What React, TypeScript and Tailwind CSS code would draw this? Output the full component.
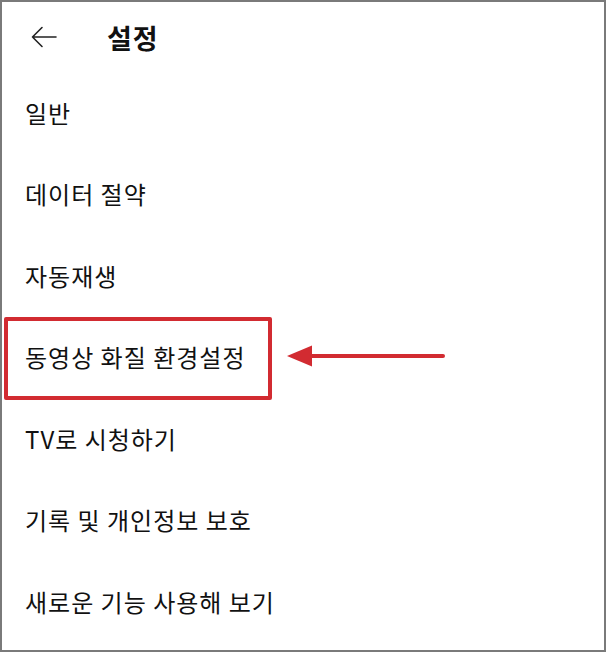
const items = [
  "일반",
  "데이터 절약",
  "자동재생",
  "동영상 화질 환경설정",
  "TV로 시청하기",
  "기록 및 개인정보 보호",
  "새로운 기능 사용해 보기",
];

export default function App() {
  return (
    <div className="relative w-[606px] h-[652px] border-2 border-[#7a7a7a] bg-white text-[#111] font-['Noto_Sans_CJK_KR','Noto_Sans',sans-serif]">
      {/* header */}
      <div className="flex items-center h-[70px] pl-[29px]">
        <svg width="26" height="22" viewBox="0 0 26 22" fill="none" stroke="#222" strokeWidth="1.6" strokeLinecap="round" strokeLinejoin="round">
          <path d="M25 11H1.5M11 1.5L1.5 11l9.5 9.5" />
        </svg>
        <h1 className="ml-[50px] text-[27px] font-bold leading-none tracking-[1px]">설정</h1>
      </div>

      {/* menu */}
      <div className="flex flex-col">
        {items.map((label) => (
          <div key={label} className="flex items-center h-[81.5px] px-[23px] text-[24px] leading-none tracking-[1px]">
            {label}
          </div>
        ))}
      </div>

      {/* annotation */}
      <div className="absolute left-[2px] top-[315px] w-[268px] h-[83px] border-4 border-[#d22b31] rounded-[2px]" />
      <svg className="absolute left-[284px] top-[342px]" width="160" height="24" viewBox="0 0 160 24">
        <line x1="22" y1="12" x2="157" y2="12" stroke="#d22b31" strokeWidth="4" strokeLinecap="round" />
        <polygon points="1,12 26,1.5 26,22.5" fill="#d22b31" />
      </svg>
    </div>
  );
}
